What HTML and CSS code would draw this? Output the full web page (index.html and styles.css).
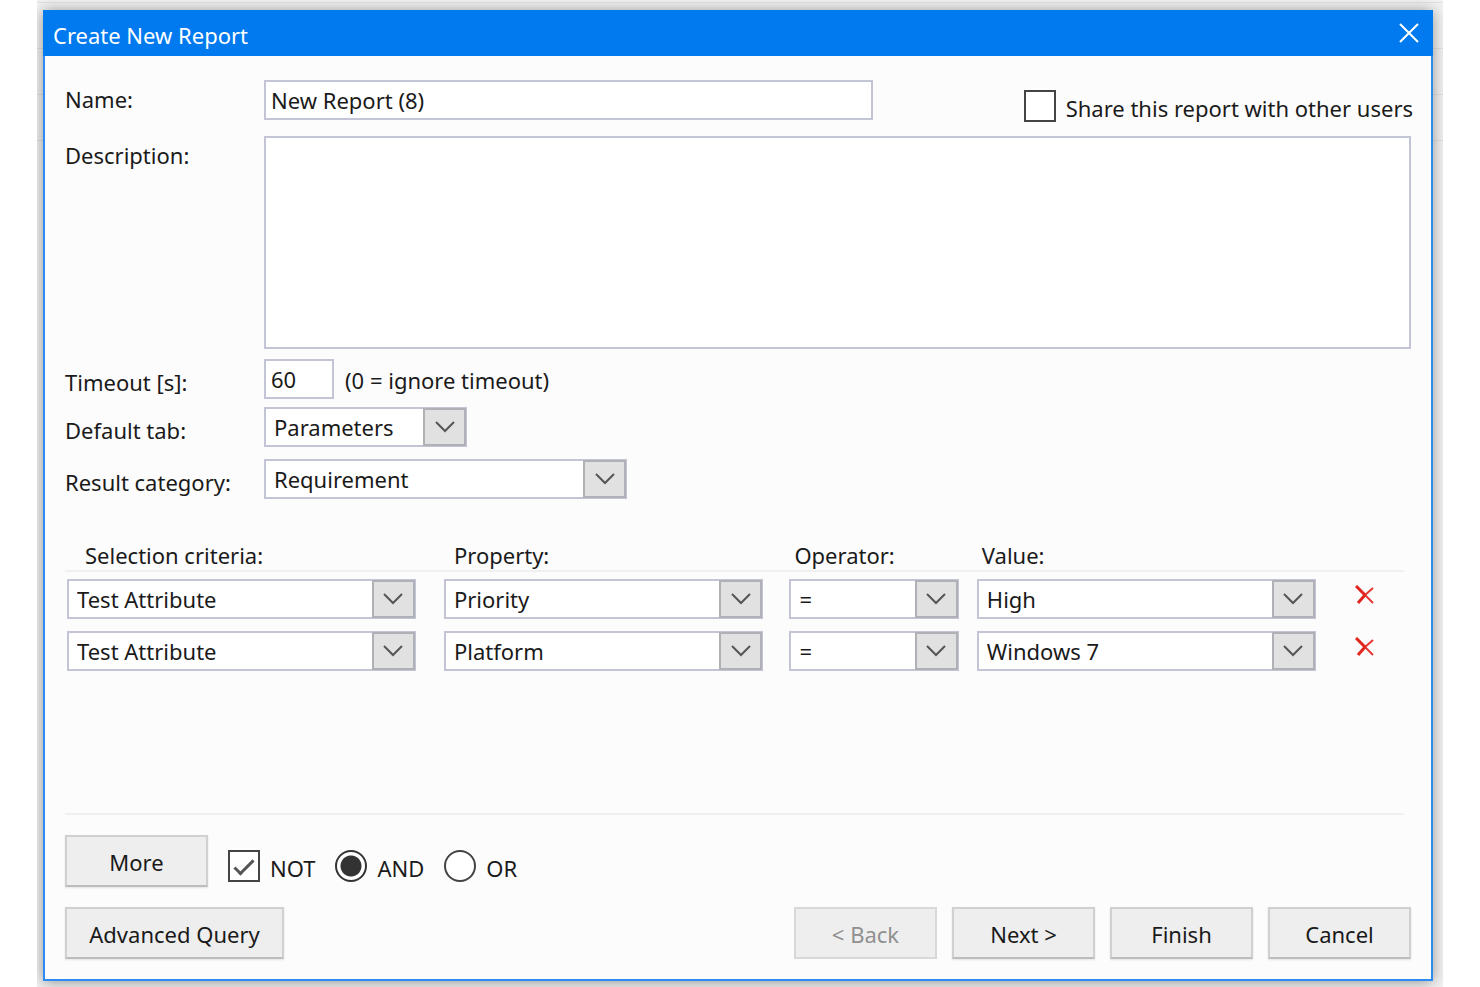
FILE: index.html
```html
<!DOCTYPE html>
<html lang="en">
<head>
    <meta charset="UTF-8">
    <title>Create New Report</title>
    <link rel="stylesheet" href="styles.css">
</head>
<body>
    <svg class="symbols" aria-hidden="true">
        <symbol id="chevron" viewBox="0 0 20 12">
            <path d="M1 1 L10 10 L19 1" fill="none" stroke="#555" stroke-width="2"/>
        </symbol>
        <symbol id="delete" viewBox="0 0 20 20">
            <path d="M2 2 L18 18" fill="none" stroke="#e5362f" stroke-width="2"/>
            <path d="M18 3 L10 10" fill="none" stroke="#e5362f" stroke-width="2"/>
            <path d="M1 1 L10 10 M10 10 L3 18" fill="none" stroke="#e0261f" stroke-width="3"/>
        </symbol>
    </svg>

    <div class="backdrop">
        <form class="dialog" onsubmit="return false">
            <div class="titlebar">
                <h1>Create New Report</h1>
                <button type="button" class="close" aria-label="Close">
                    <svg width="20" height="20" viewBox="0 0 20 20"><path d="M1 1 L19 19 M19 1 L1 19" stroke="#fff" stroke-width="2"/></svg>
                </button>
            </div>

            <div class="content">
                <div class="row name-row">
                    <label class="caption" for="name">Name:</label>
                    <input type="text" id="name" class="text name" value="New Report (8)">
                    <label class="option share"><input type="checkbox"><span>Share this report with other users</span></label>
                </div>
                <div class="row description-row">
                    <label class="caption" for="description">Description:</label>
                    <textarea id="description" class="text description"></textarea>
                </div>
                <div class="row timeout-row">
                    <label class="caption low" for="timeout">Timeout [s]:</label>
                    <input type="text" id="timeout" class="text timeout" value="60">
                    <span class="hint">(0 = ignore timeout)</span>
                </div>
                <div class="row tab-row">
                    <label class="caption low" for="tab">Default tab:</label>
                    <div class="combo tab">
                        <select id="tab"><option>Parameters</option></select>
                        <span class="arrow"><svg width="20" height="12"><use href="#chevron"/></svg></span>
                    </div>
                </div>
                <div class="row">
                    <label class="caption low" for="category">Result category:</label>
                    <div class="combo category">
                        <select id="category"><option>Requirement</option></select>
                        <span class="arrow"><svg width="20" height="12"><use href="#chevron"/></svg></span>
                    </div>
                </div>

                <div class="criteria">
                    <table>
                        <thead>
                            <tr>
                                <th class="col-criteria">Selection criteria:</th>
                                <th class="col-property">Property:</th>
                                <th class="col-operator">Operator:</th>
                                <th class="col-value">Value:</th>
                                <th class="col-delete"></th>
                            </tr>
                        </thead>
                        <tbody>
                            <tr>
                                <td class="col-criteria"><div class="combo"><select aria-label="Selection criteria"><option>Test Attribute</option></select><span class="arrow"><svg width="20" height="12"><use href="#chevron"/></svg></span></div></td>
                                <td class="col-property"><div class="combo"><select aria-label="Property"><option>Priority</option></select><span class="arrow"><svg width="20" height="12"><use href="#chevron"/></svg></span></div></td>
                                <td class="col-operator"><div class="combo"><select aria-label="Operator"><option>=</option></select><span class="arrow"><svg width="20" height="12"><use href="#chevron"/></svg></span></div></td>
                                <td class="col-value"><div class="combo"><select aria-label="Value"><option>High</option></select><span class="arrow"><svg width="20" height="12"><use href="#chevron"/></svg></span></div></td>
                                <td class="col-delete"><button type="button" class="delete" aria-label="Delete"><svg width="20" height="20"><use href="#delete"/></svg></button></td>
                            </tr>
                            <tr>
                                <td class="col-criteria"><div class="combo"><select aria-label="Selection criteria"><option>Test Attribute</option></select><span class="arrow"><svg width="20" height="12"><use href="#chevron"/></svg></span></div></td>
                                <td class="col-property"><div class="combo"><select aria-label="Property"><option>Platform</option></select><span class="arrow"><svg width="20" height="12"><use href="#chevron"/></svg></span></div></td>
                                <td class="col-operator"><div class="combo"><select aria-label="Operator"><option>=</option></select><span class="arrow"><svg width="20" height="12"><use href="#chevron"/></svg></span></div></td>
                                <td class="col-value"><div class="combo"><select aria-label="Value"><option>Windows 7</option></select><span class="arrow"><svg width="20" height="12"><use href="#chevron"/></svg></span></div></td>
                                <td class="col-delete"><button type="button" class="delete" aria-label="Delete"><svg width="20" height="20"><use href="#delete"/></svg></button></td>
                            </tr>
                        </tbody>
                    </table>
                </div>

                <div class="logic">
                    <button type="button" class="button">More</button>
                    <label class="option"><input type="checkbox" checked><span>NOT</span></label>
                    <label class="option"><input type="radio" name="logic" checked><span>AND</span></label>
                    <label class="option"><input type="radio" name="logic"><span>OR</span></label>
                </div>

                <div class="footer">
                    <button type="button" class="button advanced">Advanced Query</button>
                    <button type="button" class="button" disabled>&lt; Back</button>
                    <button type="button" class="button">Next &gt;</button>
                    <button type="button" class="button">Finish</button>
                    <button type="button" class="button">Cancel</button>
                </div>
            </div>
        </form>
    </div>
</body>
</html>
```
FILE: styles.css
```css
* {
    box-sizing: border-box;
}
body {
    margin: 0;
    padding: 0 37px;
    background-color: #fff;
    color: #1a1a1a;
    font-family: "Noto Sans", "Open Sans", sans-serif;
    font-size: 22px;
    line-height: 30px;
}
input, select, textarea, button {
    margin: 0;
    font: inherit;
    color: inherit;
}
svg {
    display: block;
}
.symbols {
    display: none;
}
.backdrop {
    display: flex;
    min-height: 100vh;
    padding: 10px 10px 6px 6px;
    overflow: hidden;
    background: repeating-linear-gradient(#f2f2f2 0 2px, #e2e2e2 2px 3px, #f2f2f2 3px 46px) 0 0 / 100% 141px no-repeat #f2f2f2;
}
.dialog {
    flex: 1;
    display: flex;
    flex-direction: column;
    border: 2px solid #2a8cf0;
    background-color: #fcfcfc;
    box-shadow: 0 1px 14px rgba(0,0,0,0.4);
}
.titlebar {
    display: flex;
    justify-content: space-between;
    align-items: center;
    height: 46px;
    margin: -2px -2px 0;
    padding: 4px 14px 0 10px;
    background-color: #007aee;
    color: #fff;
}
.titlebar h1 {
    margin: 0;
    font-size: 22px;
    font-weight: normal;
}
.close {
    margin-top: -4px;
    padding: 0;
    border: 0;
    background: none;
}
.content {
    flex: 1;
    display: flex;
    flex-direction: column;
    padding: 24px 20px 20px;
}
.row {
    display: flex;
    align-items: flex-start;
}
.caption {
    flex: none;
    width: 199px;
    padding-top: 4px;
}
.caption.low {
    padding-top: 8px;
}
.text {
    height: 40px;
    padding: 0 5px;
    border: 2px solid #c3c5d6;
    border-radius: 0;
    background-color: #fff;
    outline: none;
}
.name {
    width: 609px;
}
.name-row {
    margin-bottom: 13px;
}
.description-row {
    margin-bottom: 10px;
}
.description {
    flex: 1;
    height: 213px;
    resize: none;
}
.timeout-row {
    margin-bottom: 8px;
}
.timeout {
    width: 70px;
}
.hint {
    padding: 6px 0 0 11px;
}
.tab-row {
    margin-bottom: 12px;
}
.tab {
    width: 203px;
}
.category {
    width: 363px;
}
.combo {
    position: relative;
    height: 40px;
}
.combo select {
    width: 100%;
    height: 100%;
    padding: 0 44px 0 8px;
    border: 2px solid #c3c5d6;
    border-radius: 0;
    background-color: #fff;
    appearance: none;
    outline: none;
}
.arrow {
    position: absolute;
    top: 1px;
    right: 1px;
    bottom: 1px;
    width: 43px;
    display: flex;
    justify-content: center;
    align-items: center;
    border: 2px solid #b0b1b6;
    background-color: #e1e1e1;
    pointer-events: none;
}
.option {
    display: flex;
    align-items: flex-start;
    gap: 10px;
}
.option span {
    padding-top: 3px;
}
.option input {
    flex: none;
    width: 32px;
    height: 32px;
    border: 2px solid #444;
    background-color: #fff;
    appearance: none;
}
.option input[type="radio"] {
    border-radius: 50%;
}
.option input[type="radio"]:checked {
    border-color: #333;
    background: radial-gradient(circle, #333 0 10px, #fff 11px);
}
.option input[type="checkbox"]:checked::before {
    content: "";
    display: block;
    width: 17px;
    height: 7px;
    margin: 8px 0 0 4px;
    border: solid #555;
    border-width: 0 0 3px 3px;
    transform: rotate(-45deg);
}
.share {
    margin: 10px -2px 0 auto;
}
.criteria {
    flex: 1;
    margin: 40px 7px 20px 0;
    border-bottom: 2px solid #f0f0f0;
}
.criteria table {
    width: 100%;
    border-collapse: collapse;
    table-layout: fixed;
}
.criteria th {
    height: 32px;
    padding: 0 0 0 10px;
    border-bottom: 2px solid #f0f0f0;
    font-weight: normal;
    text-align: left;
}
.criteria td {
    padding: 7px 0 5px;
}
.criteria .col-criteria {
    width: 28.3%;
}
.criteria .col-property {
    width: 25.8%;
}
.criteria .col-operator {
    width: 14%;
}
.criteria .col-value {
    width: 25.3%;
}
.criteria th.col-criteria {
    padding-left: 20px;
}
.criteria th.col-operator, .criteria th.col-value {
    padding-left: 5px;
}
.criteria td.col-criteria {
    padding-left: 2px;
    padding-right: 28px;
}
.criteria td.col-property {
    padding-right: 26px;
}
.criteria td.col-operator {
    padding-right: 18px;
}
.criteria td.col-delete {
    padding-left: 10px;
}
.delete {
    display: block;
    margin: 0 auto 8px;
    padding: 0;
    border: 0;
    background: none;
}
.logic {
    display: flex;
    align-items: center;
    gap: 20px;
    margin-bottom: 20px;
}
.logic .option {
    margin-top: 10px;
}
.button {
    min-width: 143px;
    height: 52px;
    padding: 2px 20px 0;
    border: 2px solid #d0d0d0;
    border-bottom-color: #bcbcbc;
    border-radius: 0;
    background-color: #eee;
    box-shadow: 0 1px 2px rgba(0,0,0,0.1);
}
.button:disabled {
    border-color: #d8d8d8;
    color: #909090;
    box-shadow: none;
}
.footer {
    display: flex;
    gap: 15px;
}
.advanced {
    min-width: 219px;
    margin-right: auto;
}
```
